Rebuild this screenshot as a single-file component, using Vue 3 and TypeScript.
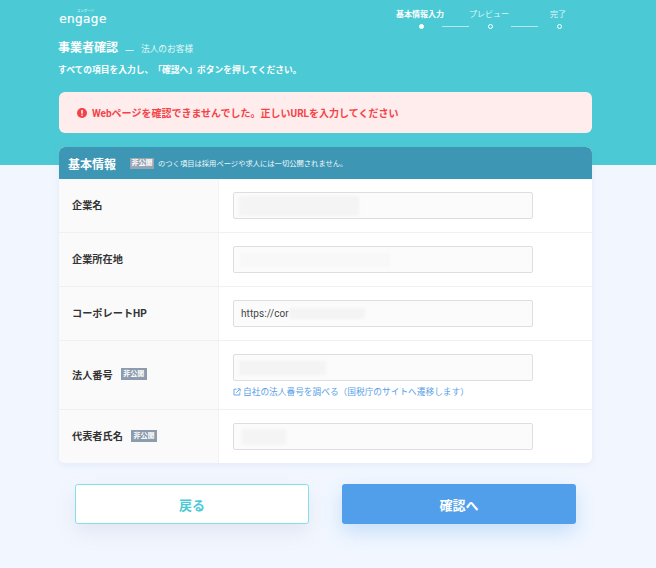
<script setup lang="ts">
interface Row {
  label: string
  priv: boolean
  text?: string
  patchW: number
  patchH: number
  patchMl: number
  link?: boolean
  cls: string
}
const rows: Row[] = [
  { label: '企業名', priv: false, patchW: 120, patchH: 20, patchMl: 5, cls: 'r53' },
  { label: '企業所在地', priv: false, patchW: 150, patchH: 14, patchMl: 6, cls: 'r53 faint' },
  { label: 'コーポレートHP', priv: false, text: 'https://cor', patchW: 76, patchH: 11, patchMl: 0, cls: 'r53' },
  { label: '法人番号', priv: true, patchW: 87, patchH: 14, patchMl: 5, link: true, cls: 'r68' },
  { label: '代表者氏名', priv: true, patchW: 44, patchH: 16, patchMl: 8, cls: 'r53 last' },
]
</script>

<template>
  <div class="page">
    <div class="wrap">
      <header class="top">
        <div class="logo">
          <span class="ruby">エンゲージ</span>
          <span class="word">engage</span>
        </div>
        <ol class="steps">
          <li class="step on"><span class="lbl">基本情報入力</span><i class="dot"></i></li>
          <li class="line"></li>
          <li class="step"><span class="lbl">プレビュー</span><i class="dot"></i></li>
          <li class="line"></li>
          <li class="step"><span class="lbl">完了</span><i class="dot"></i></li>
        </ol>
      </header>

      <div class="title">
        <h1>事業者確認</h1>
        <span class="dash">—</span>
        <span class="sub">法人のお客様</span>
      </div>
      <p class="lead">すべての項目を入力し、「確認へ」ボタンを押してください。</p>

      <div class="alert">
        <svg class="alert-ic" viewBox="0 0 12 12" width="10" height="10">
          <circle cx="6" cy="6" r="6" fill="#f44348" />
          <rect x="5.1" y="2.4" width="1.8" height="4.6" rx=".6" fill="#fff" />
          <circle cx="6" cy="8.7" r="1" fill="#fff" />
        </svg>
        <span>Webページを確認できませんでした。正しいURLを入力してください</span>
      </div>

      <section class="card">
        <div class="card-head">
          <h2>基本情報</h2>
          <span class="badge head-badge">非公開</span>
          <span class="note">のつく項目は採用ページや求人には一切公開されません。</span>
        </div>
        <div v-for="r in rows" :key="r.label" class="row" :class="r.cls">
          <div class="th">
            <span>{{ r.label }}</span>
            <span v-if="r.priv" class="badge">非公開</span>
          </div>
          <div class="td">
            <div class="field">
              <span v-if="r.text" class="val">{{ r.text }}</span>
              <span
                class="patch"
                :style="{ width: r.patchW + 'px', height: r.patchH + 'px', marginLeft: r.patchMl + 'px' }"
              ></span>
            </div>
            <a v-if="r.link" class="link">
              <svg viewBox="0 0 10 10" width="8" height="8" fill="none" stroke="#5a9fe8" stroke-width="1.1">
                <path d="M4.5 1.5H1.2v7.3h7.3V5.5" />
                <path d="M4 6l4.6-4.6M5.8 1h3.2v3.2" />
              </svg>
              <span>自社の法人番号を調べる（国税庁のサイトへ遷移します）</span>
            </a>
          </div>
        </div>
      </section>

      <div class="actions">
        <button class="btn back" type="button">戻る</button>
        <button class="btn next" type="button">確認へ</button>
      </div>
    </div>
  </div>
</template>

<style>
html, body { margin: 0; padding: 0; }
</style>

<style scoped>
.page {
  height: 568px;
  overflow: hidden;
  background: linear-gradient(#4bcad5 0, #4bcad5 165px, #f2f7ff 165px, #f2f7ff 100%);
  font-family: Roboto, "Noto Sans CJK JP", sans-serif;
  color: #333;
  text-spacing-trim: space-all;
}
.wrap { width: 533px; margin-left: 59px; }
.top {
  height: 41px;
  display: flex;
  justify-content: space-between;
  align-items: flex-start;
}
.logo {
  display: flex;
  flex-direction: column;
  align-items: center;
  width: 48px;
  padding-top: 10px;
  color: #fff;
  line-height: 1;
}
.ruby { font-size: 3.2px; height: 3px; letter-spacing: .1px; margin-left: 5px; }
.word {
  font-family: "DejaVu Sans", sans-serif;
  font-size: 12px;
  letter-spacing: .4px;
  line-height: 12px;
  -webkit-text-stroke: .2px #fff;
}
.steps {
  list-style: none;
  margin: 0;
  padding: 9px 20px 0 0;
  display: flex;
  align-items: flex-end;
  color: #dff5f7;
}
.step {
  width: 26px;
  display: flex;
  flex-direction: column;
  align-items: center;
  gap: 4px;
}
.lbl { font-size: 8px; line-height: 11px; white-space: nowrap; margin-left: -2px; }
.on .lbl { font-weight: 700; color: #fff; }
.dot {
  width: 5px;
  height: 5px;
  box-sizing: border-box;
  border: 1px solid #fff;
  border-radius: 50%;
}
.on .dot { background: #fff; }
.line { width: 27px; height: 1px; background: #b5e9ed; margin: 0 8px 2px 8px; }
.title {
  display: flex;
  align-items: center;
  height: 15px;
  color: #fff;
}
.title h1 { margin: -1px 0 0 -1px; font-size: 12px; font-weight: 700; line-height: 15px; }
.dash { font-family: "Noto Sans CJK JP", sans-serif; font-size: 10px; margin: 0 7px; }
.sub { font-size: 8.7px; color: #e6f8f9; }
.lead {
  margin: 8px 0 0 -1px;
  height: 12px;
  font-size: 8.75px;
  line-height: 12px;
  font-weight: 700;
  color: #fff;
}
.alert {
  margin-top: 16px;
  height: 41px;
  box-sizing: border-box;
  padding-left: 18px;
  display: flex;
  align-items: center;
  gap: 5px;
  background: #ffecec;
  border-radius: 6px;
  color: #f44348;
  font-size: 10px;
  font-weight: 700;
}
.card {
  margin-top: 14px;
  border-radius: 6px;
  background: #fff;
  box-shadow: 0 2px 8px rgba(120, 150, 190, .12);
  overflow: hidden;
}
.card-head {
  height: 32px;
  display: flex;
  align-items: center;
  padding-left: 9px;
  background: #3d96b4;
  color: #fff;
}
.card-head h2 { margin: 0; font-size: 12px; font-weight: 700; }
.badge {
  display: inline-block;
  width: 26px;
  height: 12px;
  line-height: 12px;
  text-align: center;
  background: #8c9bad;
  color: #fff;
  font-size: 7px;
  font-weight: 700;
  white-space: nowrap;
}
.head-badge { width: 24px; height: 11px; line-height: 11px; margin-left: 14px; background: #9aa5b3; }
.note { margin-left: 4px; font-size: 7.3px; color: #eef8fb; }
.row { display: flex; border-bottom: 1px solid #f0f0f0; box-sizing: border-box; }
.r53 { height: 54px; }
.r68 { height: 69px; }
.last { height: 53px; border-bottom: 0; }
.th {
  width: 160px;
  flex: none;
  box-sizing: border-box;
  padding: 0 0 2px 13px;
  display: flex;
  align-items: center;
  gap: 8px;
  background: #fafafa;
  border-right: 1px solid #f3f3f3;
  font-size: 10.2px;
  font-weight: 700;
  color: #333;
}
.td { padding: 13px 0 0 14px; }
.field {
  width: 300px;
  height: 27px;
  box-sizing: border-box;
  display: flex;
  align-items: center;
  background: #fbfbfb;
  border: 1px solid #dedede;
  border-radius: 2px;
  overflow: hidden;
}
.val { margin-left: 7px; font-size: 10px; color: #444; letter-spacing: .1px; }
.patch { background: #f4f4f4; display: block; filter: blur(1px); }
.faint .patch { background: #f8f8f8; }
.link {
  margin-top: 4px;
  display: flex;
  align-items: center;
  gap: 2px;
  height: 13px;
  color: #5a9fe8;
  font-size: 8.7px;
}
.actions {
  margin-top: 21px;
  padding-left: 16px;
  display: flex;
  gap: 33px;
}
.btn {
  width: 234px;
  height: 40px;
  box-sizing: border-box;
  border-radius: 3px;
  font-family: inherit;
  font-size: 13px;
  font-weight: 700;
  padding: 0;
}
.back {
  background: #fff;
  border: 1px solid #86dfe6;
  color: #4bcad5;
  box-shadow: 0 8px 20px rgba(120, 130, 150, .14);
}
.next {
  background: #519fea;
  border: 0;
  color: #fff;
  box-shadow: 0 8px 20px rgba(81, 159, 234, .28);
}
</style>
